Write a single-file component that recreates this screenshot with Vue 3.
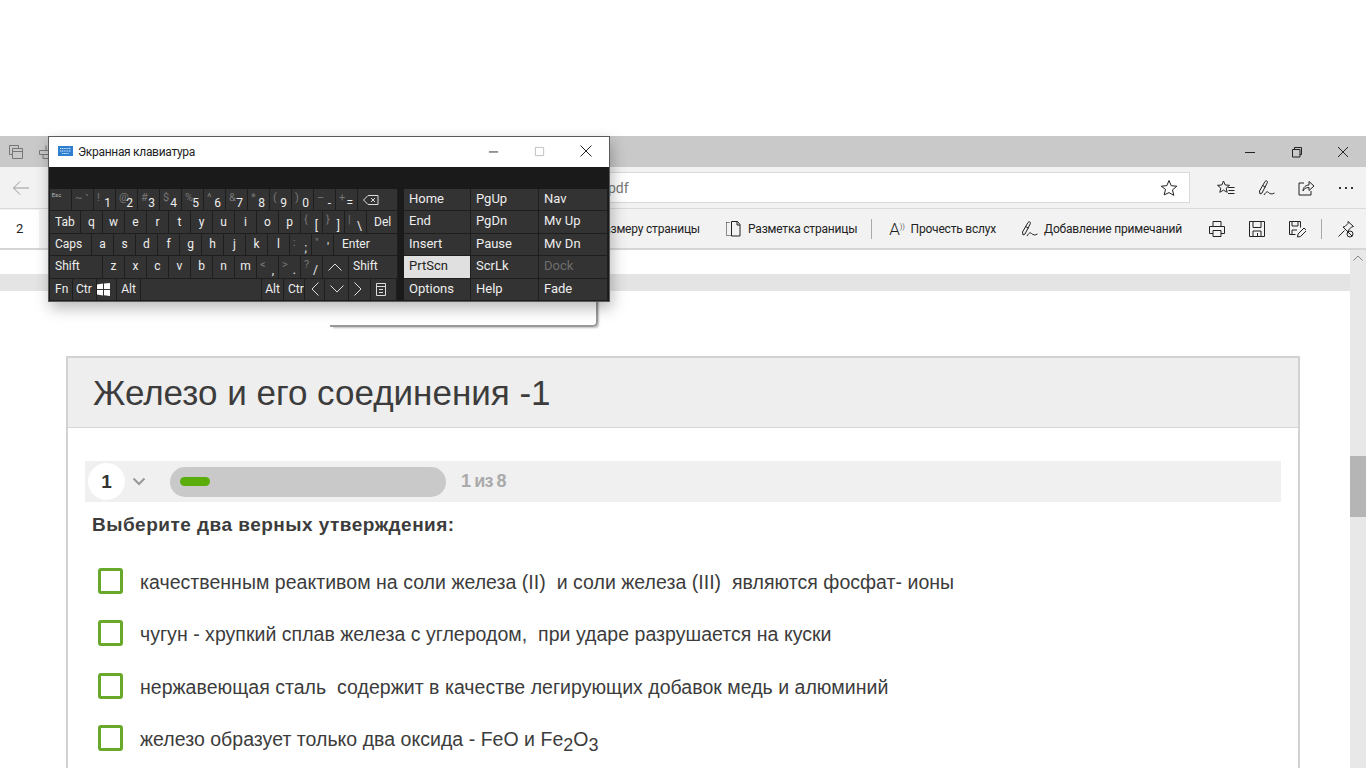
<template>
  <div class="screen">
    <div class="blank"></div>

    <div class="browser">
      <div class="tabbar">
        <svg class="tb-ic" viewBox="0 0 16 16"><path d="M1.500 1.500h9v3M1.500 1.500v9h3M4.500 4.500h10v10h-10zM4.500 7.500h10" /></svg>
        <svg class="tb-ic tb-ic2" viewBox="0 0 16 16"><path d="M8 1.500v5M1.500 6.500h12v4h-12zM5 10.500v4h5" /></svg>
        <div class="grow"></div>
        <div class="winbtns">
          <svg viewBox="0 0 12 12"><path d="M1 6.500h10" /></svg>
          <svg viewBox="0 0 12 12"><path d="M1.500 3.500h7.500v7.500h-7.500zM3.500 3.500v-2h7v7h-2" /></svg>
          <svg viewBox="0 0 12 12"><path d="M1 1l10 10M11 1L1 11" /></svg>
        </div>
      </div>

      <div class="addr-row">
        <svg class="back" viewBox="0 0 18 16"><path d="M17 8H1.500M8 1.500L1.500 8 8 14.500" /></svg>
        <div class="addr">
          <span class="url">pdf</span>
          <svg class="ic18" viewBox="0 0 18 18"><path d="M9 1.500l2.200 5.200 5.600.5-4.300 3.700 1.300 5.500L9 13.600l-4.800 2.300 1.300-5.500L1.200 7.200l5.600-.5z" /></svg>
        </div>
        <div class="hub">
          <svg class="ic18" viewBox="0 0 18 18"><path d="M6.500 2l1.700 4 4.300.3-3.300 2.800 1 4.200-3.700-2.200-3.700 2.200 1-4.200L.5 6.300l4.300-.3zM11 8.500h6.500M11.500 11.500h6M11 14.500h6.500" /></svg>
          <svg class="ic18" viewBox="0 0 18 18"><path d="M3 15L2.500 12 8 2.500c1-1.500 3-.5 2.300 1.200L5 14zM5.500 6.500l3 1.700M7 16c2-3 3-4 4.500-2.500S15 15.500 17.500 14" /></svg>
          <svg class="ic18" viewBox="0 0 18 18"><path d="M7 4H2v12h12v-4M6 12c0-4 3-6 6-6V2.500L17 7l-5 4.500V8.500c-3 0-5 1-6 3.500z" /></svg>
          <div class="dots"><i></i><i></i><i></i></div>
        </div>
      </div>

      <div class="pdfbar">
        <div class="pageno">2</div>
        <div class="fit">По размеру страницы</div>
        <div class="tool layout">
          <svg class="ic18" viewBox="0 0 18 18"><path stroke-dasharray="1 1" d="M2.500 2.500v13h4M2.500 2.500h4" /><path d="M7.500 1.500h6l2.500 3v11.500h-8.500zM13 1.500v3.500h3" /></svg>
          <span>Разметка страницы</span>
        </div>
        <i class="sep sep1"></i>
        <div class="tool read">
          <span class="aa">A<sup>))</sup></span>
          <span>Прочесть вслух</span>
        </div>
        <div class="tool note">
          <svg class="ic18" viewBox="0 0 18 18"><path d="M3 15L2.500 12 8 2.500c1-1.500 3-.5 2.300 1.200L5 14zM5.500 6.500l3 1.700M7 16c2-3 3-4 4.500-2.500S15 15.500 17.500 14" /></svg>
          <span>Добавление примечаний</span>
        </div>
        <div class="pdf-icons">
          <svg class="ic18" viewBox="0 0 18 18"><path d="M5 6.500v-5h8v5M1.500 6.500h15v7h-3.500M5 13.500H1.500v-7M5 10.500h8v6H5z" /></svg>
          <svg class="ic18" viewBox="0 0 18 18"><path d="M1.500 1.500h15v15h-15zM5 1.500v6h8v-6M5 16.500v-5.500h8v5.500M9.500 13v3.500" /></svg>
          <svg class="ic18" viewBox="0 0 18 18"><path d="M1.500 14.500v-13h11v6M4 1.500v4.500h6v-4.500M1.500 14.500h6M4 14.500v-4.500h5M9.500 17l.5-3 6-6 2.500 2.500-6 6z" /></svg>
          <i class="sep sep2"></i>
          <svg class="ic18" viewBox="0 0 18 18"><path d="M11 1.500l5.500 5-2 .5-3 3-.5 2L6 7l2-.5 3-3zM1.500 16.500L7.500 10.500" /><circle cx="13" cy="14" r="3" /><path d="M11 12l4 4" /></svg>
        </div>
      </div>

      <div class="viewer">
        <div class="pages">
          <div class="page-end"></div>
          <div class="page-gap"></div>
          <div class="page">
            <div class="stub"></div>
            <div class="card">
              <div class="card-head">Железо и его соединения -1</div>
              <div class="card-body">
                <div class="progress">
                  <div class="num">1</div>
                  <svg class="chev" viewBox="0 0 14 9"><path d="M1.500 1.500L7 7l5.500-5.500" /></svg>
                  <div class="track"><div class="fill"></div></div>
                  <div class="count">1 из 8</div>
                </div>
                <div class="question">Выберите два верных утверждения:</div>
                <div class="answers">
                  <div class="answer"><span class="check"></span><span>качественным реактивом на соли железа (II)&nbsp; и соли железа (III)&nbsp; являются фосфат- ионы</span></div>
                  <div class="answer"><span class="check"></span><span>чугун - хрупкий сплав железа с углеродом,&nbsp; при ударе разрушается на куски</span></div>
                  <div class="answer"><span class="check"></span><span>нержавеющая сталь&nbsp; содержит в качестве легирующих добавок медь и алюминий</span></div>
                  <div class="answer"><span class="check"></span><span>железо образует только два оксида - FeO и Fe<sub>2</sub>O<sub>3</sub></span></div>
                </div>
              </div>
            </div>
          </div>
        </div>
        <div class="scrollbar">
          <svg class="up" viewBox="0 0 10 6"><path d="M.5 5.500L5 1l4.500 4.500" /></svg>
          <div class="thumb"></div>
        </div>
      </div>
    </div>

    <!-- on-screen keyboard floats over the browser -->
    <div class="osk">
      <div class="osk-title">
        <svg class="kbd-ic" viewBox="0 0 15 10"><rect width="15" height="10" fill="#2f7fd0" /><path d="M2 2.500h11M2 5h11M4 7.500h7" stroke="#cfe6fb" stroke-width="1.200" stroke-dasharray="1.200 .6" /></svg>
        <span class="osk-name">Экранная клавиатура</span>
        <div class="grow"></div>
        <svg class="osk-btn" viewBox="0 0 12 12"><path d="M1 6.500h10" /></svg>
        <svg class="osk-btn off" viewBox="0 0 12 12"><path d="M1.500 1.500h9v9h-9z" /></svg>
        <svg class="osk-btn" viewBox="0 0 12 12"><path d="M.5.500l11 11M11.500.500l-11 11" /></svg>
      </div>
      <div class="osk-strip"></div>
      <div class="osk-keys">
        <div class="main-keys">
          <div v-for="(row, r) in rows" :key="r" class="krow">
            <div
              v-for="k in row"
              :key="k.t + k.w"
              class="key"
              :class="{ left: k.w > 24 || k.left, dual: k.s, mute: k.mute }"
              :style="{ width: k.w + 'px', paddingLeft: k.pad }"
            >
              <span v-if="k.s" class="shift">{{ k.s }}</span>
              <span v-if="k.t === 'esc'" class="tiny">Esc</span>
              <svg v-else-if="k.t === 'bs'" class="kic bs" viewBox="0 0 16 10"><path d="M5 .5h10v9H5L.5 5zM8 3l4 4M12 3L8 7" /></svg>
              <svg v-else-if="k.t === 'up'" class="kic" viewBox="0 0 14 8"><path d="M.5 7.500L7 1l6.500 6.500" /></svg>
              <svg v-else-if="k.t === 'down'" class="kic" viewBox="0 0 14 8"><path d="M.5.500L7 7 13.500.500" /></svg>
              <svg v-else-if="k.t === 'lt'" class="kic tall" viewBox="0 0 8 14"><path d="M7.500.500L1 7l6.500 6.500" /></svg>
              <svg v-else-if="k.t === 'gt'" class="kic tall gt" viewBox="0 0 8 14"><path d="M.5.500L7 7 .5 13.500" /></svg>
              <svg v-else-if="k.t === 'win'" class="kic win" viewBox="0 0 13 13"><path d="M0 1.500L6 .5v5.500H0zM7 .4L13 0v6H7zM0 7h6v5.500l-6-1zM7 7h6v6l-6-.8z" /></svg>
              <svg v-else-if="k.t === 'menu'" class="kic calc" viewBox="0 0 10 13"><path d="M.5.500h9v12h-9zM.5 3.500h9M3 6.500h4M3 9.500h4" /></svg>
              <span v-else class="lbl">{{ k.t }}</span>
            </div>
          </div>
        </div>
        <div class="side-keys">
          <div
            v-for="k in sideKeys"
            :key="k.t"
            class="skey"
            :class="{ on: k.t === 'PrtScn', dim: k.t === 'Dock' }"
          >{{ k.t }}</div>
        </div>
      </div>
    </div>
  </div>
</template>

<script setup>
const ks = (s, w = 22) => s.split(' ').map((t) => ({ t, w }))
const dual = (pairs) => pairs.map(([s, t]) => ({ s, t, w: 22 }))

const rows = [
  [
    { t: 'esc', w: 22 },
    { t: '`', s: '~', w: 22, mute: true },
    ...dual([['!', '1'], ['@', '2'], ['#', '3'], ['$', '4'], ['%', '5'], ['^', '6'], ['&', '7'], ['*', '8'], ['(', '9'], [')', '0'], ['–', '-'], ['+', '=']]),
    { t: 'bs', w: 40 },
  ],
  [
    { t: 'Tab', w: 31 },
    ...ks('q w e r t y u i o p'),
    ...dual([['{', '['], ['}', ']'], ['|', '\\']]),
    { t: 'Del', w: 31, pad: '7px' },
  ],
  [
    { t: 'Caps', w: 42 },
    ...ks('a s d f g h j k l'),
    ...dual([[':', ';'], ['"', "'"]]),
    { t: 'Enter', w: 64, pad: '8px' },
  ],
  [
    { t: 'Shift', w: 53 },
    ...ks('z x c v b n m'),
    ...dual([['<', ','], ['>', '.'], ['?', '/']]),
    { t: 'up', w: 26 },
    { t: 'Shift', w: 49, pad: '4px' },
  ],
  [
    { t: 'Fn', w: 23, left: true },
    { t: 'Ctr', w: 24, left: true, pad: '3px' },
    { t: 'win', w: 20 },
    { t: 'Alt', w: 24 },
    { t: ' ', w: 121 },
    { t: 'Alt', w: 22 },
    { t: 'Ctr', w: 21, left: true, pad: '4px' },
    { t: 'lt', w: 20 },
    { t: 'down', w: 24 },
    { t: 'gt', w: 22 },
    { t: 'menu', w: 26 },
  ],
]

const sideKeys = [
  'Home', 'PgUp', 'Nav',
  'End', 'PgDn', 'Mv Up',
  'Insert', 'Pause', 'Mv Dn',
  'PrtScn', 'ScrLk', 'Dock',
  'Options', 'Help', 'Fade',
].map((t) => ({ t }))
</script>

<style>
html, body {
  margin: 0;
  overflow: hidden;
  background: #fff;
}
</style>

<style scoped>
.screen {
  position: relative;
  width: 1366px;
  height: 768px;
  overflow: hidden;
  display: flex;
  flex-direction: column;
  background: #fff;
  font-family: Roboto, "Noto Sans", sans-serif;
}
.blank {
  height: 136px;
  flex-shrink: 0;
}
.browser {
  flex: 1;
  min-height: 0;
  display: flex;
  flex-direction: column;
}
.grow {
  flex: 1;
}
svg {
  fill: none;
  stroke: #222;
  stroke-width: 1;
  flex-shrink: 0;
}

/* tab strip */
.tabbar {
  height: 31px;
  flex-shrink: 0;
  background: #c9c9c9;
  display: flex;
  align-items: center;
  padding-left: 8px;
  box-sizing: border-box;
}
.tb-ic {
  width: 16px;
  height: 16px;
  stroke: #777;
}
.tb-ic2 {
  margin-left: 14px;
}
.winbtns {
  display: flex;
  gap: 34.500px;
  padding-right: 17px;
}
.winbtns svg {
  width: 12px;
  height: 12px;
}

/* address row */
.addr-row {
  height: 42px;
  flex-shrink: 0;
  background: #f2f2f2;
  border-bottom: 1px solid #d9d9d9;
  box-sizing: border-box;
  display: flex;
  align-items: center;
  padding-left: 12px;
}
.back {
  width: 18px;
  height: 16px;
  stroke: #999;
}
.addr {
  margin-left: 20px;
  width: 1140px;
  height: 31px;
  box-sizing: border-box;
  background: #fff;
  border: 1px solid #d9d9d9;
  display: flex;
  align-items: center;
  justify-content: space-between;
  padding: 0 11px 0 557px;
}
.url {
  font-size: 14px;
  color: #777;
}
.ic18 {
  width: 18px;
  height: 18px;
}
.hub {
  display: flex;
  align-items: center;
  gap: 22px;
  margin-left: 27px;
}
.dots {
  width: 18px;
  display: flex;
  justify-content: space-between;
  padding: 0 2px;
  box-sizing: border-box;
}
.dots i {
  width: 2px;
  height: 2px;
  background: #333;
}

/* pdf toolbar */
.pdfbar {
  height: 41px;
  flex-shrink: 0;
  background: #f2f2f2;
  border-bottom: 2px solid #d6d6d6;
  box-sizing: border-box;
  display: flex;
  align-items: center;
  font-size: 12px;
  letter-spacing: -0.200px;
  color: #222;
}
.pageno {
  width: 39px;
  height: 38px;
  background: #fff;
  text-align: center;
  line-height: 38px;
  font-size: 13px;
  flex-shrink: 0;
}
.fit {
  width: 661px;
  flex-shrink: 0;
  text-align: right;
  white-space: nowrap;
}
.tool {
  display: flex;
  align-items: center;
  gap: 6px;
  white-space: nowrap;
  flex-shrink: 0;
}
.layout {
  margin-left: 24px;
}
.sep {
  display: block;
  width: 1px;
  height: 20px;
  background: #aaa;
  flex-shrink: 0;
}
.sep1 {
  margin-left: 14px;
}
.sep2 {
  margin: 0 -7px;
}
.read {
  margin-left: 17px;
}
.aa {
  font-size: 17px;
  line-height: 18px;
  font-weight: 300;
}
.aa sup {
  font-size: 8px;
  line-height: 0;
  vertical-align: 6px;
}
.note {
  margin-left: 24px;
}
.pdf-icons {
  display: flex;
  align-items: center;
  gap: 22px;
  margin-left: 26px;
}

/* viewer */
.viewer {
  flex: 1;
  min-height: 0;
  display: flex;
}
.pages {
  flex: 1;
  min-width: 0;
}
.page-end {
  height: 24px;
}
.page-gap {
  height: 17px;
  background: #e4e4e4;
}
.stub {
  width: 268px;
  height: 36px;
  margin-left: 330px;
  box-sizing: border-box;
  border-right: 2px solid #999;
  border-bottom: 2px solid #999;
  border-radius: 0 0 5px 0;
  box-shadow: 2px 2px 2px -1px rgba(0, 0, 0, 0.25);
}
.page {
  background: #fff;
}
.card {
  margin: 29px 50px 0 66px;
  border: 2px solid #d2d2d2;
  border-bottom: 0;
  height: 420px;
}
.card-head {
  height: 70px;
  box-sizing: border-box;
  background: #eee;
  border-bottom: 1px solid #d6d6d6;
  padding-left: 25px;
  font: 35px/70px "Liberation Sans", Arial, sans-serif;
  color: #3c3c3c;
}
.card-body {
  padding: 33px 17px 0;
  font-family: "Liberation Sans", Arial, sans-serif;
}
.progress {
  height: 41px;
  background: #f0f0f0;
  display: flex;
  align-items: center;
  padding-left: 3px;
}
.num {
  width: 37px;
  height: 37px;
  border-radius: 50%;
  background: #fff;
  text-align: center;
  font-weight: bold;
  font-size: 19px;
  line-height: 37px;
  color: #333;
}
.chev {
  width: 14px;
  height: 9px;
  margin-left: 7px;
  stroke: #999;
  stroke-width: 2;
}
.track {
  width: 276px;
  height: 30px;
  margin-left: 24px;
  border-radius: 15px;
  background: #c9c9c9;
  display: flex;
  align-items: center;
  padding-left: 10px;
  box-sizing: border-box;
}
.fill {
  width: 30px;
  height: 9px;
  border-radius: 5px;
  background: #5aad0a;
}
.count {
  margin-left: 15px;
  font-size: 18px;
  font-weight: bold;
  color: #aaa;
  letter-spacing: -0.900px;
}
.question {
  margin: 12px 0 0 7px;
  font-size: 19px;
  line-height: 22px;
  font-weight: bold;
  color: #3c3c3c;
  letter-spacing: 0.480px;
}
.answers {
  margin: 32px 0 0 13px;
}
.answer {
  height: 52.300px;
  display: flex;
  align-items: flex-start;
  gap: 17px;
  font-size: 19.500px;
  line-height: 29px;
  letter-spacing: 0.030px;
  color: #3c3c3c;
  white-space: nowrap;
}
.check {
  width: 25px;
  height: 26px;
  box-sizing: border-box;
  border: 3px solid #68a82a;
  border-radius: 3px;
  flex-shrink: 0;
}
.answer sub {
  font-size: 18px;
  line-height: 0;
}

/* scrollbar */
.scrollbar {
  width: 16px;
  background: #e8e8e8;
  display: flex;
  flex-direction: column;
  align-items: center;
}
.up {
  width: 10px;
  height: 6px;
  margin-top: 5px;
  stroke: #888;
}
.thumb {
  width: 16px;
  height: 61px;
  margin-top: 195px;
  background: #b5b5b5;
}

/* on-screen keyboard */
.osk {
  position: absolute;
  left: 48px;
  top: 136px;
  width: 562px;
  height: 166px;
  box-sizing: border-box;
  border: 1px solid #5a5a5a;
  background: #1a1a1a;
  box-shadow: 2px 6px 14px rgba(0, 0, 0, 0.28);
  display: flex;
  flex-direction: column;
}
.osk-title {
  height: 30px;
  box-sizing: border-box;
  padding: 0 0 2px 9px;
  background: #fff;
  display: flex;
  align-items: center;
  flex-shrink: 0;
}
.kbd-ic {
  width: 15px;
  height: 10px;
  stroke: none;
}
.osk-name {
  margin: 2px 0 0 5px;
  font-size: 12px;
  letter-spacing: -0.300px;
  color: #222;
}
.osk-btn {
  width: 11px;
  height: 11px;
  margin-left: 35px;
}
.osk-btn:first-of-type {
  margin-left: 0;
}
.osk-btn:last-child {
  width: 12px;
  height: 12px;
  margin-right: 17px;
}
.osk-btn.off {
  stroke: #bbb;
}
.osk-strip {
  height: 22px;
  background: #1a1a1a;
  flex-shrink: 0;
}
.osk-keys {
  display: flex;
  padding-left: 1px;
}
.main-keys {
  width: 348px;
  flex-shrink: 0;
}
.krow {
  display: flex;
  height: 22.400px;
}
.key {
  position: relative;
  box-sizing: border-box;
  height: 100%;
  background: #333;
  border-right: 1px solid #1e1e1e;
  border-bottom: 1px solid #1e1e1e;
  color: #eee;
  font-size: 12px;
  line-height: 21px;
  text-align: center;
  display: flex;
  align-items: center;
  justify-content: center;
}
.key.left {
  justify-content: flex-start;
  padding-left: 5px;
}
.key.dual {
  justify-content: flex-end;
  padding-right: 4px;
}
.key.dual .lbl {
  position: relative;
  top: 4px;
}
.key.mute .lbl {
  color: #777;
  top: 1px;
}
.shift {
  position: absolute;
  left: 3px;
  top: -2px;
  font-size: 11px;
  color: #777;
}
.tiny {
  font-size: 6px;
  color: #bbb;
  position: relative;
  top: -5px;
  left: -4px;
}
.kic {
  width: 14px;
  height: 8px;
  stroke: #ddd;
}
.kic.tall {
  width: 8px;
  height: 14px;
}
.kic.gt {
  margin-right: 4px;
}
.kic.bs {
  width: 16px;
  height: 10px;
}
.kic.win {
  width: 13px;
  height: 13px;
  fill: #fff;
  stroke: none;
  margin-right: 6px;
}
.kic.calc {
  width: 10px;
  height: 13px;
  margin-right: 3px;
}
.side-keys {
  margin-left: 6px;
  display: grid;
  grid-template-columns: 67px 68px 69px;
  grid-auto-rows: 22.400px;
}
.skey {
  box-sizing: border-box;
  background: #333;
  border-right: 1px solid #1e1e1e;
  border-bottom: 1px solid #1e1e1e;
  color: #eee;
  font-size: 13px;
  line-height: 20px;
  padding-left: 5px;
}
.skey.on {
  background: #e0e0e0;
  color: #222;
}
.skey.dim {
  color: #6e6e6e;
}
</style>
